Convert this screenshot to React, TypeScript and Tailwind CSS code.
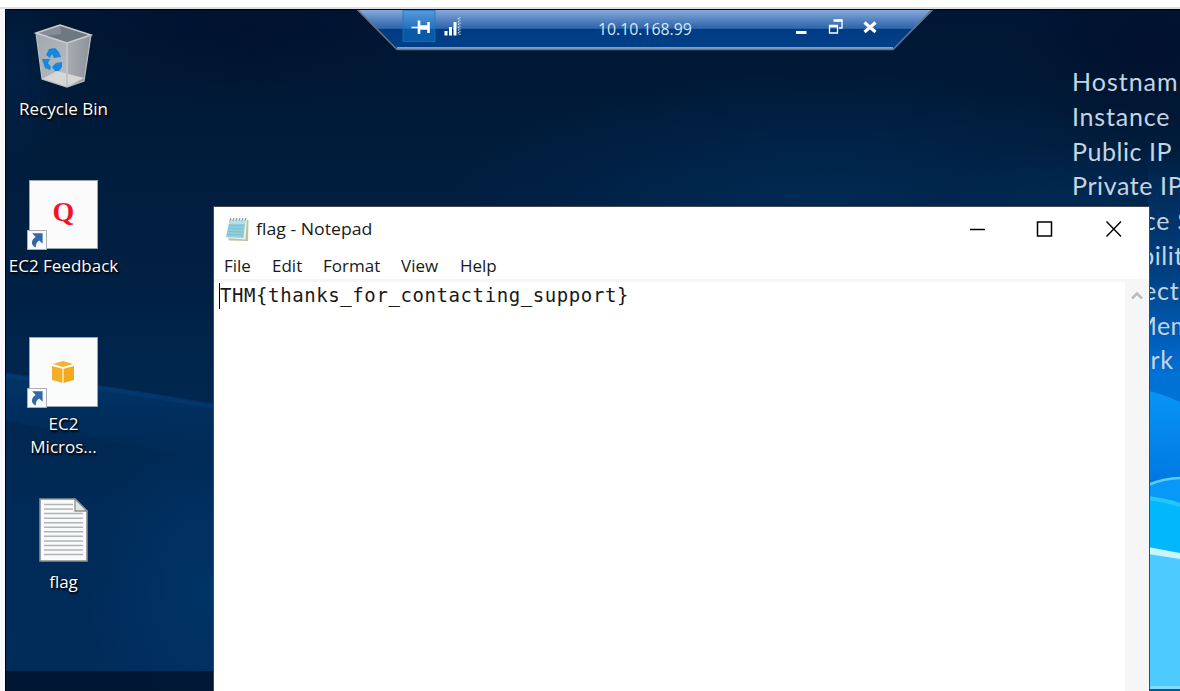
import type { ReactNode } from 'react';

function Wallpaper() {
  return (
    <svg className="absolute inset-0 h-full w-full" viewBox="6 10 1174 681" preserveAspectRatio="none">
      <defs>
        <linearGradient id="base" x1="0" y1="0" x2="0" y2="1">
          <stop offset="0" stopColor="#001633" />
          <stop offset="0.2" stopColor="#001c3b" />
          <stop offset="0.4" stopColor="#002044" />
          <stop offset="0.54" stopColor="#00264e" />
          <stop offset="0.75" stopColor="#002b58" />
          <stop offset="1" stopColor="#002c5a" />
        </linearGradient>
        <radialGradient id="glow" cx="0.5" cy="0.5" r="0.5">
          <stop offset="0" stopColor="#003a70" stopOpacity="0.6" />
          <stop offset="1" stopColor="#00386c" stopOpacity="0" />
        </radialGradient>
        <radialGradient id="dark" cx="0.5" cy="0.5" r="0.5">
          <stop offset="0" stopColor="#000c26" stopOpacity="0.6" />
          <stop offset="1" stopColor="#000c26" stopOpacity="0" />
        </radialGradient>
        <linearGradient id="beam" x1="0" y1="0" x2="0" y2="1">
          <stop offset="0" stopColor="#00407e" stopOpacity="0.55" />
          <stop offset="1" stopColor="#00407e" stopOpacity="0" />
        </linearGradient>
        <linearGradient id="side" x1="0" y1="150" x2="0" y2="500" gradientUnits="userSpaceOnUse">
          <stop offset="0" stopColor="#002c58" stopOpacity="0" />
          <stop offset="0.16" stopColor="#003063" />
          <stop offset="0.35" stopColor="#004080" />
          <stop offset="0.5" stopColor="#0057ae" />
          <stop offset="0.64" stopColor="#0071d5" />
          <stop offset="1" stopColor="#0078de" />
        </linearGradient>
        <linearGradient id="wave" x1="0" y1="392" x2="0" y2="480" gradientUnits="userSpaceOnUse">
          <stop offset="0" stopColor="#0894f6" />
          <stop offset="1" stopColor="#0079e0" />
        </linearGradient>
      </defs>
      <rect x="5" y="9" width="1175" height="682" fill="url(#base)" />
      <ellipse cx="820" cy="220" rx="380" ry="150" fill="url(#glow)" opacity="0.8" />
      <ellipse cx="1100" cy="220" rx="170" ry="80" fill="url(#glow)" opacity="0.7" />
      <ellipse cx="1150" cy="50" rx="140" ry="90" fill="url(#dark)" />
      <ellipse cx="250" cy="30" rx="180" ry="80" fill="url(#dark)" opacity="0.7" />
      <ellipse cx="205" cy="590" rx="120" ry="180" fill="url(#glow)" />
      <ellipse cx="14" cy="70" rx="50" ry="100" fill="url(#glow)" opacity="0.4" />
      <path d="M5 374Q110 386 213 405V460Q120 445 5 420Z" fill="url(#beam)" />
      <path d="M5 375Q110 388 213 406" stroke="#064584" strokeWidth="5" opacity="0.35" fill="none" />
      <rect x="5" y="671" width="208" height="20" fill="#001631" opacity="0.93" />
      <path d="M1148 150H1180V691H1148Z" fill="url(#side)" />
      <path d="M1148 391Q1163 394 1180 402V480H1148Z" fill="url(#wave)" />
      <path d="M1148 484Q1165 477 1180 477V510H1148Z" fill="#0798f8" />
      <path d="M1148 485Q1165 478 1180 478" stroke="#5dc9f7" strokeWidth="2.5" fill="none" />
      <path d="M1148 497Q1165 499 1180 504V560H1148Z" fill="#02b7fb" />
      <path d="M1148 498Q1165 500 1180 505" stroke="#25c7fc" strokeWidth="4" fill="none" />
      <path d="M1148 548L1180 555V688H1148Z" fill="#4dcaff" />
      <path d="M1148 547L1180 553V559L1148 554Z" fill="#c8f5fe" />
      <rect x="1148" y="686" width="32" height="3" fill="#7ddcff" />
      <rect x="1148" y="689" width="32" height="2" fill="#075596" />
    </svg>
  );
}

function DesktopLabel({ children, className }: { children: ReactNode; className: string }) {
  return (
    <span className={`block whitespace-nowrap text-white [text-shadow:1px_2px_2px_#000,0_0_2px_#000] ${className}`}>
      {children}
    </span>
  );
}

function ShortcutArrow() {
  return (
    <svg className="absolute -bottom-[2px] -left-[3px]" width="20" height="20" viewBox="0 0 20 20">
      <rect x="0.5" y="0.5" width="19" height="19" fill="#f8f9fa" stroke="#a9aeb3" />
      <path d="M5.2 3.3H15.6V13.8L12.2 10.6Q8.6 12.6 8.8 17.6Q4.3 15.8 5 11.6Q5.6 8.6 8.6 6.9Z" fill="#3469a8" />
    </svg>
  );
}

function RecycleBinIcon() {
  return (
    <svg width="60" height="66" viewBox="0 0 60 66">
      <defs>
        <linearGradient id="binL" x1="0" y1="0" x2="1" y2="1">
          <stop offset="0" stopColor="#a2a8ae" />
          <stop offset="1" stopColor="#b9bdc2" />
        </linearGradient>
        <linearGradient id="binR" x1="0" y1="0" x2="1" y2="0">
          <stop offset="0" stopColor="#a8adb2" />
          <stop offset="1" stopColor="#8b929a" />
        </linearGradient>
      </defs>
      <path d="M2 9L33 19L33 63L8 55Z" fill="url(#binL)" />
      <path d="M33 19L57 11L50 57L33 63Z" fill="url(#binR)" />
      <path d="M2 9L26 1L57 11L33 19Z" fill="#6f7780" />
      <path d="M26 1L27 10L11 12L2 9Z" fill="#858c93" />
      <path d="M8 55L23 47L50 54L33 63Z" fill="#d6d6d5" />
      <path d="M2 9L26 1L57 11L33 19Z" fill="none" stroke="#c9cdd0" strokeWidth="1.500" />
      <path d="M2 9L8 55L33 63L50 57L57 11" fill="none" stroke="#b9bec2" strokeWidth="1.200" />
      <path d="M33 20V62" stroke="#c0c4c8" strokeWidth="2" />
      <g fill="#1687df">
        <path d="M12 31L15 25L21 24L25 28L27 33L20 34L18 30L16 34Z" />
        <path d="M8 35L16 35L14 39L17 43L16 46L11 44Z" />
        <path d="M18 43L22 39L28 38L28 43L25 47L21 47Z" />
      </g>
    </svg>
  );
}

function TextFileIcon() {
  const rows = [0, 1, 2, 3, 4, 5, 6, 7, 8, 9, 10, 11];
  return (
    <svg width="49" height="64" viewBox="0 0 49 64">
      <path d="M1 1H36L48 13V63H1Z" fill="#f9fafb" stroke="#898f8d" strokeWidth="1.600" />
      {rows.map((i) => (
        <path key={i} d={`M5 ${6.5 + i * 4.55}H${i < 2 ? 34 : 44}`} stroke="#b1b5b8" strokeWidth="1.500" />
      ))}
      <path d="M36 1V13H48Z" fill="#e3e5e5" stroke="#898f8d" strokeWidth="1.300" />
    </svg>
  );
}

function NotepadIcon() {
  return (
    <svg width="25" height="26" viewBox="0 0 25 26">
      <path d="M21 3L23.500 4L23 25L4 24.500L3 22Z" fill="#c8bd9b" />
      <path d="M5 3H22L20.500 23.500L1 22Z" fill="#e6f1f2" />
      <path d="M4.500 4H20.500L18.500 22L1 21Z" fill="#8fcedb" />
      <path d="M5 4H20.500L20 8L4 8Z" fill="#b3dfe6" />
      <path d="M4 9.500L19 10M3.500 12.500L18.500 13M3 15.500L18 16M2.500 18.500L17.500 19" stroke="#77bccb" strokeWidth="0.800" />
      <path d="M5 4.500L6 2M8 4.500L9 2M11 4.500L12 2M14 4.500L15 2M17 4.500L18 2M20 4.500L21 2" stroke="#7b888b" strokeWidth="1" />
    </svg>
  );
}

function ConnectionBar() {
  return (
    <div className="absolute left-[351px] top-0 flex h-[42px] w-[576px]">
      <svg className="absolute inset-0" width="576" height="42" viewBox="357 10 576 42">
        <defs>
          <linearGradient id="bar" x1="0" y1="0" x2="0" y2="1">
            <stop offset="0" stopColor="#86a9dc" />
            <stop offset="0.42" stopColor="#3469ae" />
            <stop offset="0.46" stopColor="#306aad" />
            <stop offset="0.47" stopColor="#003c83" />
            <stop offset="1" stopColor="#003f86" />
          </linearGradient>
        </defs>
        <path d="M357 10H933L894 50H397Z" fill="url(#bar)" />
        <path d="M397 48H893" stroke="#78a0d3" strokeWidth="2" />
        <path d="M357 9L397 49.500H893L932.500 9" stroke="#687384" strokeWidth="1.500" fill="none" />
        <rect x="403" y="10.500" width="32" height="31" fill="#1684db" fillOpacity="0.4" stroke="#1475c8" strokeOpacity="0.75" />
        <path d="M411.500 27.500H419" stroke="#fff" strokeWidth="1.600" />
        <path d="M419 20.500V34M428.500 22V33" stroke="#fff" strokeWidth="2.600" />
        <path d="M419 27.500H428" stroke="#fff" strokeWidth="4.500" />
        <path d="M446 31V35.500M450.500 27V35.500M455 22V35.500" stroke="#fff" strokeWidth="3" />
        <path d="M458.500 18V35" stroke="#d7e3f1" strokeWidth="1.300" strokeDasharray="1.500 1.300" />
        <path d="M460 17V35" stroke="#b6cbe4" strokeWidth="1.300" strokeDasharray="1.300 1.500" />
        <path d="M796 32.500H806.500" stroke="#fff" strokeWidth="3" />
        <path d="M829.500 26.500H837.500V33H829.500ZM834 20.500H842V28H839" fill="none" stroke="#fff" strokeWidth="1.300" />
        <path d="M829 26H838M833.500 20.500H842.500" stroke="#fff" strokeWidth="2.600" />
        <path d="M864.500 22.500L875.500 32M875.500 22.500L864.500 32" stroke="#fff" strokeWidth="3.200" />
      </svg>
      <span className="relative ml-[241px] mt-[7px] block w-[95px] origin-left scale-x-[0.93] whitespace-nowrap text-[17px] leading-[24px] text-[#dce6f2]">
        10.10.168.99
      </span>
    </div>
  );
}

const hostInfo = [
  { text: 'Hostnam', tracking: 'tracking-[1px]' },
  { text: 'Instance', tracking: 'tracking-[0.8px]' },
  { text: 'Public IP', tracking: 'tracking-[0.55px]' },
  { text: 'Private IP', tracking: 'tracking-[0.6px]' },
  { text: 'Instance Size', tracking: 'tracking-[0.8px]' },
  { text: 'Availability Zone', tracking: 'tracking-[0.5px]' },
  { text: 'Architecture', tracking: 'tracking-[0.8px]' },
  { text: 'Total Memory', tracking: 'tracking-[0.4px]' },
  { text: 'Network', tracking: 'tracking-[0.8px]' },
];

function HostInfo() {
  return (
    <div className="absolute left-[1066px] top-[54px] flex w-[250px] flex-col font-['Lato','Open_Sans',sans-serif] text-[25px] leading-[34.8px] text-[#c3d5e4]">
      {hostInfo.map((row) => (
        <span key={row.text} className={`block whitespace-nowrap ${row.tracking}`}>
          {row.text}
        </span>
      ))}
    </div>
  );
}

function NotepadWindow() {
  return (
    <div className="absolute left-[207px] top-[196px] flex h-[486px] w-[937px] flex-col border border-b-0 border-[#45484d] bg-white text-[#191919]">
      <div className="flex h-[44px] shrink-0 items-center pl-[11px]">
        <NotepadIcon />
        <span className="ml-[6px] block origin-left scale-x-[1.04] whitespace-nowrap text-[17px] leading-6">flag - Notepad</span>
        <svg className="ml-auto mr-[25px]" width="156" height="18" viewBox="0 0 156 18">
          <path d="M2 9.500H17" stroke="#000" strokeWidth="1.500" />
          <rect x="69.500" y="2" width="14" height="14" fill="none" stroke="#000" strokeWidth="1.500" />
          <path d="M138.500 1.500L153 16.500M153 1.500L138.500 16.500" stroke="#000" strokeWidth="1.400" />
        </svg>
      </div>
      <div className="flex h-[28px] shrink-0 items-center pl-[10px] pt-[2px] text-[17px] leading-6">
        <span className="block w-[48px]">File</span>
        <span className="block w-[51px]">Edit</span>
        <span className="block w-[78px]">Format</span>
        <span className="block w-[59px]">View</span>
        <span className="block">Help</span>
      </div>
      <div className="h-[3px] shrink-0 bg-[#f6f6f6]" />
      <div className="flex grow">
        <div className="flex grow items-start pl-[5px]">
          <div className="mt-px h-[26px] w-px bg-black" />
          <span className="block whitespace-pre font-['DejaVu_Sans_Mono',monospace] text-[19px] leading-[26px] tracking-[0.59px]">
            {'THM{thanks_for_contacting_support}'}
          </span>
        </div>
        <div className="flex w-[24px] justify-center bg-[#f6f6f6] pt-[8px]">
          <svg width="12" height="11" viewBox="0 0 12 11">
            <path d="M1 8.500L6 3.500L11 8.500" fill="none" stroke="#bdbdbd" strokeWidth="2.500" />
          </svg>
        </div>
      </div>
    </div>
  );
}

export default function App() {
  return (
    <div className="flex h-[691px] w-[1180px] flex-col overflow-hidden bg-white font-['Open_Sans','Noto_Sans',sans-serif]">
      <div className="h-[9px] shrink-0 border-b-2 border-[#dedfde]" />
      <div className="flex h-[682px] bg-[#f8f8fc] pl-[5px]">
        <div className="relative h-[682px] w-[1175px] overflow-hidden border-l border-t border-black">
          <Wallpaper />
          <div className="relative flex w-[115px] flex-col items-center text-[17px] leading-[24px]">
            <div className="flex h-[170px] w-full flex-col items-center pt-[14px]">
              <RecycleBinIcon />
              <DesktopLabel className="mt-[7px]">Recycle Bin</DesktopLabel>
            </div>
            <div className="flex h-[157px] w-full flex-col items-center">
              <div className="relative flex h-[69px] w-[69px] items-center justify-center border border-[#99a4af] bg-[#fbfbfb] font-['Liberation_Serif',serif] text-[28px] font-bold text-[#f0142b]">
                <span className="-mt-[5px] block leading-none">Q</span>
                <ShortcutArrow />
              </div>
              <DesktopLabel className="mt-[5px]">EC2 Feedback</DesktopLabel>
            </div>
            <div className="flex h-[161px] w-full flex-col items-center">
              <div className="relative flex h-[70px] w-[69px] items-center justify-center border border-[#99a4af] bg-[#fafbfb]">
                <svg className="-ml-[2px]" width="22" height="22" viewBox="0 0 22 22">
                  <path d="M0 5L11 8V22L0 19Z" fill="#f5ae28" />
                  <path d="M22 5L11 8V22L22 19Z" fill="#f3a81f" />
                  <path d="M1 3L11 0L21 3L11 6Z" fill="#f6b22f" />
                  <path d="M11 8V22" stroke="#fff0c8" strokeWidth="1.300" fill="none" />
                </svg>
                <ShortcutArrow />
              </div>
              <DesktopLabel className="mt-[5px] leading-[23px]">EC2</DesktopLabel>
              <DesktopLabel className="leading-[23px]">Micros...</DesktopLabel>
            </div>
            <div className="flex w-full flex-col items-center">
              <TextFileIcon />
              <DesktopLabel className="mt-[8px]">flag</DesktopLabel>
            </div>
          </div>
          <HostInfo />
          <ConnectionBar />
          <NotepadWindow />
        </div>
      </div>
    </div>
  );
}
